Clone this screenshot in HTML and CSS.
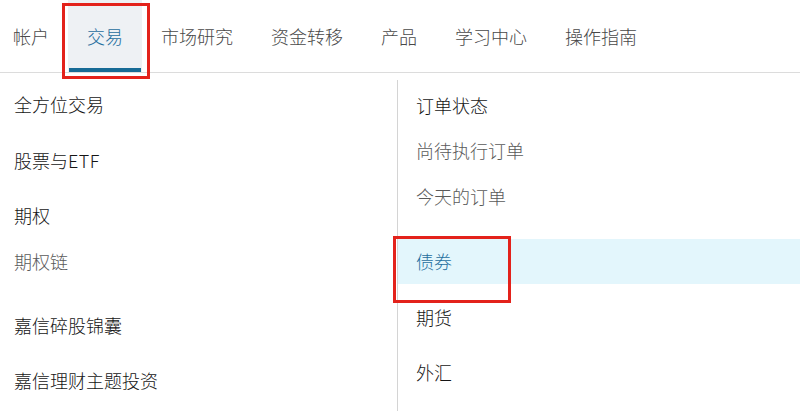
FILE: index.html
```html
<!DOCTYPE html>
<html lang="zh-CN">
<head>
<meta charset="utf-8">
<link rel="stylesheet" href="styles.css">
</head>
<body>
<nav class="nav">
  <div class="tab first">帐户</div>
  <div class="tab active">交易<span class="mark"></span></div>
  <div class="tab">市场研究</div>
  <div class="tab">资金转移</div>
  <div class="tab">产品</div>
  <div class="tab">学习中心</div>
  <div class="tab">操作指南</div>
</nav>
<main class="menu">
  <section class="col left">
    <div class="item i1">全方位交易</div>
    <div class="item i2">股票与<span class="latin">ETF</span></div>
    <div class="item i3">期权</div>
    <div class="item sub i4">期权链</div>
    <div class="item i5">嘉信碎股锦囊</div>
    <div class="item i6">嘉信理财主题投资</div>
  </section>
  <section class="col right">
    <div class="ritem r1">订单状态</div>
    <div class="ritem sub r2">尚待执行订单</div>
    <div class="ritem sub r3">今天的订单</div>
    <div class="ritem hl r4">债券<span class="mark mark2"></span></div>
    <div class="ritem r5">期货</div>
    <div class="ritem r6">外汇</div>
  </section>
</main>
</body>
</html>
```

FILE: styles.css
```css
* { box-sizing: border-box; }
html, body { margin: 0; padding: 0; background: #fff; }
body {
  width: 800px;
  height: 411px;
  overflow: hidden;
  font-family: "Noto Sans CJK SC", "Noto Sans", sans-serif;
  font-size: 18px;
  font-weight: 300;
  color: #151515;
}
.latin {
  letter-spacing: 0.5px;
}
.nav {
  display: flex;
  height: 73px;
  border-bottom: 1px solid #dcdcdc;
}
.tab {
  position: relative;
  padding: 0 19px;
  height: 72px;
  line-height: 73px;
  color: #484848;
  white-space: nowrap;
}
.tab.first { padding-left: 13px; }
.tab.active {
  background: #eef1f4;
  color: #1f6e9e;
}
.tab.active::after {
  content: "";
  position: absolute;
  left: 1px;
  right: 1px;
  bottom: 0;
  height: 4px;
  background: #176b96;
}
.mark {
  position: absolute;
  left: -6px;
  top: 3px;
  width: 88px;
  height: 76px;
  border: 3px solid #e3221b;
  z-index: 2;
}
.menu {
  display: flex;
  height: 338px;
}
.col.left {
  width: 397px;
  padding-left: 14px;
}
.col.right {
  flex: 1;
  margin-top: 7px;
  border-left: 1px solid #d4d4d4;
}
.item, .ritem {
  height: 26px;
  line-height: 26px;
  white-space: nowrap;
}
.sub { color: #5a5a5a; }
.i1 { margin-top: 18px; }
.i2 { margin-top: 30px; }
.i3 { margin-top: 29px; }
.i4 { margin-top: 20px; }
.i5 { margin-top: 38px; }
.i6 { margin-top: 29px; }
.ritem { padding-left: 18px; }
.r1 { margin-top: 12px; }
.r2 { margin-top: 19px; }
.r3 { margin-top: 20px; }
.r4 {
  position: relative;
  margin-top: 30px;
  height: 45px;
  line-height: 45px;
  background: #e3f6fc;
  color: #1f6e9e;
}
.mark2 {
  left: -5px;
  top: -3px;
  width: 118px;
  height: 67px;
}
.r5 { margin-top: 20px; }
.r6 { margin-top: 29px; }
```
